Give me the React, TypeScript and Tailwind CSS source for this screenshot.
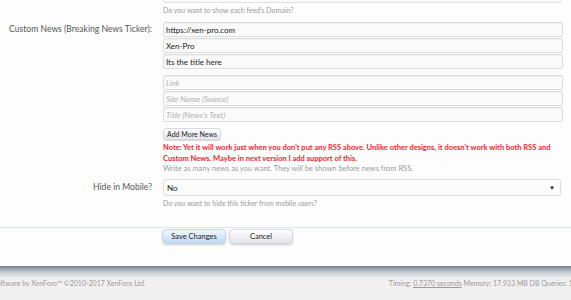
import React from "react";

const font = { fontFamily: 'Lato, "Open Sans", "Liberation Sans", sans-serif' };

function TextBox({ value, placeholder }: { value?: string; placeholder?: string }) {
  return (
    <div className="flex h-[15px] w-[400px] items-center rounded-[2px] border border-[#dcdcdc] bg-[#fafafa] px-[2px] text-[8px] leading-none text-[#222] shadow-[inset_0_1px_1px_rgba(0,0,0,0.04)]">
      {value ? (
        <span>{value}</span>
      ) : (
        <span className="italic text-[#b0b0b0]">{placeholder}</span>
      )}
    </div>
  );
}

export default function App() {
  return (
    <div className="h-[300px] w-[571px] overflow-hidden bg-[#f0f0f0]" style={font}>
      {/* form panel */}
      <div className="bg-[#fdfdfd]">
        {/* tail of previous row */}
        <div className="flex">
          <div className="w-[163px] shrink-0" />
          <div>
            <div className="h-[3px] w-[398px] rounded-b-[2px] border-x border-b border-[#e0e0e0] bg-[#fafafa]" />
            <p className="mt-[2px] text-[7px] leading-[10px] text-[#9a9a9a]">
              Do you want to show each feed's Domain?
            </p>
          </div>
        </div>

        {/* custom news row */}
        <div className="mt-[7px] flex">
          <div className="w-[163px] shrink-0 whitespace-nowrap pr-[11px] text-right text-[8.6px] leading-[15px] text-[#555]">
            Custom News (Breaking News Ticker):
          </div>
          <div className="flex flex-col">
            <div className="flex flex-col gap-[1px]">
              <TextBox value="https://xen-pro.com" />
              <TextBox value="Xen-Pro" />
              <TextBox value="Its the title here" />
            </div>
            <div className="mt-[6px] flex flex-col gap-[1px]">
              <TextBox placeholder="Link" />
              <TextBox placeholder="Site Name (Source)" />
              <TextBox placeholder="Title (News's Text)" />
            </div>
            <div className="mt-[6px] flex leading-none">
              <button className="h-[12px] whitespace-nowrap rounded-[3px] border border-[#d8d8e0] bg-gradient-to-b from-white to-[#e4e4ec] px-[3px] text-[7px] leading-none text-[#222] shadow-[0_1px_1px_rgba(0,0,0,0.15)]">
                Add More News
              </button>
            </div>
            <p className="mt-[2px] w-[400px] text-[7.5px] font-bold leading-[11px] text-[#f2242f]">
              Note: Yet it will work just when you don't put any RSS above. Unlike other designs, it doesn't work with both RSS and Custom News. Maybe in next version I add support of this.
            </p>
            <p className="text-[7.5px] leading-[9px] text-[#9a9a9a]">
              Write as many news as you want. They will be shown before news from RSS.
            </p>
          </div>
        </div>

        {/* hide in mobile row */}
        <div className="mt-[6px] flex">
          <div className="w-[163px] shrink-0 pr-[11px] text-right text-[8.6px] leading-[17px] text-[#555]">
            Hide in Mobile?
          </div>
          <div>
            <div className="flex h-[17px] w-[398px] items-center justify-between rounded-[3px] border border-[#dcdcdc] bg-[#fcfcfc] pl-[3px] pr-[5px] text-[8px] leading-none text-[#222]">
              <span>No</span>
              <span className="text-[6px] text-[#222]">▼</span>
            </div>
            <p className="mt-[2px] text-[7px] leading-[10px] text-[#9a9a9a]">
              Do you want to hide this ticker from mobile users?
            </p>
          </div>
        </div>

        {/* submit row */}
        <div className="mt-[19px] border-t border-[#d7e7f5] pb-[22px] pt-[1px]">
          <div className="flex gap-[3px] pl-[162px]">
            <button className="h-[15px] w-[64px] rounded-[4px] border border-[#c6d6e6] bg-gradient-to-b from-[#f2f7fc] to-[#bfd8ef] text-[7.5px] leading-none text-[#222] shadow-[0_1px_2px_rgba(0,0,0,0.2)]">
              Save Changes
            </button>
            <button className="h-[15px] w-[64px] rounded-[4px] border border-[#d8d8e0] bg-gradient-to-b from-white to-[#e2e2ea] text-[7.5px] leading-none text-[#222] shadow-[0_1px_2px_rgba(0,0,0,0.2)]">
              Cancel
            </button>
          </div>
        </div>
      </div>

      {/* footer */}
      <div className="h-[12px] bg-gradient-to-b from-[#6f7f8c] via-[#c4cbd1] to-[#f0f0f0]" />
      <div className="flex items-center justify-between overflow-hidden whitespace-nowrap text-[7px] leading-[10px] text-[#9a9a9a]">
        <span className="-ml-[28px]">Forum software by XenForo™ ©2010-2017 XenForo Ltd.</span>
        <span className="-mr-[6px]">
          Timing: <span className="underline">0.7370 seconds</span> Memory: 17.933 MB DB Queries: 12
        </span>
      </div>
    </div>
  );
}
